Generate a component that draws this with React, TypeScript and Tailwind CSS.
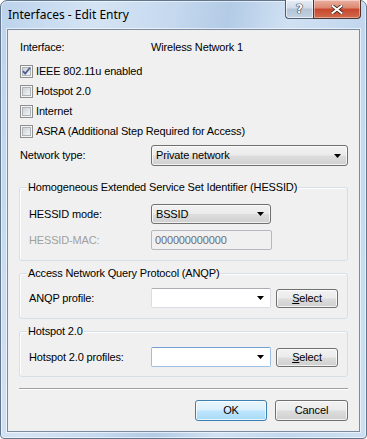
import React from 'react';

const font = "font-['Liberation_Sans',Arial,sans-serif]";

function CheckBox({ checked, label }: { checked?: boolean; label: string }) {
  return (
    <div className="flex h-[20px] items-center">
      <svg width="13" height="13" viewBox="0 0 13 13" className="ml-[1px] shrink-0">
        <defs>
          <linearGradient id="cbfill" x1="0" y1="0" x2="1" y2="1">
            <stop offset="0" stopColor="#cbcfd5" />
            <stop offset="1" stopColor="#f6f6f6" />
          </linearGradient>
        </defs>
        <rect x="0.5" y="0.5" width="12" height="12" fill="#f4f4f4" stroke="#8e8f8f" />
        <rect x="2.5" y="2.5" width="8" height="8" fill="url(#cbfill)" stroke="#aeb3b9" strokeWidth="1" />
        {checked && (
          <path d="M3 6.2 L5.2 8.6 L10 2.8" fill="none" stroke="#4a5f97" strokeWidth="1.8" />
        )}
      </svg>
      <span className="ml-[3px] text-[11px] tracking-[-0.15px] text-black">{label}</span>
    </div>
  );
}

function Arrow() {
  return (
    <svg width="7" height="4" viewBox="0 0 7 4" className="shrink-0">
      <path d="M0 0 H7 L3.5 4 Z" fill="#000" />
    </svg>
  );
}

function DropList({ value, className }: { value: string; className: string }) {
  return (
    <div
      className={`flex h-full items-center justify-between rounded-[3px] border border-[#707070] bg-[linear-gradient(180deg,#f2f2f2_0%,#ebebeb_48%,#dddddd_52%,#d0d0d0_100%)] pl-[4px] pr-[6px] shadow-[inset_0_0_0_1px_rgba(255,255,255,0.7)] ${className}`}
    >
      <span className="text-[11px] tracking-[-0.15px] text-black">{value}</span>
      <Arrow />
    </div>
  );
}

function EditCombo({ hover }: { hover?: boolean }) {
  return (
    <div
      className={`flex h-full w-[120px] items-center justify-end rounded-[2px] border bg-white pr-[6px] ${
        hover ? 'border-[#9cbfe3] border-t-[#6f9fd3]' : 'border-[#dadde3] border-t-[#abadb3]'
      }`}
    >
      <Arrow />
    </div>
  );
}

function Button({ children, className, primary }: { children: React.ReactNode; className: string; primary?: boolean }) {
  return (
    <div
      className={`flex items-center justify-center rounded-[3px] border text-[11px] tracking-[-0.15px] text-black shadow-[inset_0_0_0_1px_rgba(255,255,255,0.75)] ${
        primary
          ? 'border-[#3c7fb1] bg-[linear-gradient(180deg,#eaf6fd_0%,#d9f0fc_48%,#bee6fd_52%,#a7d9f5_100%)]'
          : 'border-[#707070] bg-[linear-gradient(180deg,#f2f2f2_0%,#ebebeb_48%,#dddddd_52%,#cfcfcf_100%)]'
      } ${className}`}
    >
      {children}
    </div>
  );
}

function Group({ title, className, children }: { title: string; className: string; children: React.ReactNode }) {
  return (
    <div className={`relative rounded-[3px] border border-[#d5dfe5] pl-[9px] shadow-[inset_1px_1px_0_#fff] ${className}`}>
      <span className="absolute -top-[8px] left-[7px] bg-[#f0f0f0] px-[1px] text-[11px] leading-[14px] tracking-[-0.15px] text-black">
        {title}
      </span>
      {children}
    </div>
  );
}

export default function App() {
  return (
    <div className={`h-[439px] w-[367px] bg-white ${font}`}>
      <div className="flex h-full flex-col rounded-t-[7px] rounded-b-[4px] border border-[#62768e] bg-[linear-gradient(100deg,#bcd3ec_0%,#d5e4f4_22%,#c4d8ee_40%,#b3cbe6_52%,#d0e1f3_66%,#c2d7ee_82%,#cde0f2_100%)] px-[6px] pb-[6px] shadow-[inset_0_0_0_1px_rgba(255,255,255,0.55)]">
        {/* title bar */}
        <div className="flex h-[28px] items-start justify-between">
          <span className="pl-[1px] pt-[6px] font-['Noto_Sans','Liberation_Sans',sans-serif] text-[12px] leading-[16px] text-black">
            Interfaces - Edit Entry
          </span>
          <div className="-mr-[1px] -mt-[1px] flex h-[19px]">
            <div className="flex w-[28px] items-center justify-center rounded-bl-[4px] border border-r-0 border-t-0 border-[#4e5d70] bg-[linear-gradient(180deg,#e6edf5_0%,#d2dce8_45%,#b3c3d6_50%,#c4d2e1_100%)] shadow-[inset_0_0_0_1px_rgba(255,255,255,0.6)]">
              <span className="font-['DejaVu_Sans',sans-serif] text-[12px] font-bold leading-none text-white [text-shadow:0_0_1px_#223,0_0_1px_#223,0_0_1px_#223]">
                ?
              </span>
            </div>
            <div className="flex w-[48px] items-center justify-center rounded-br-[4px] border border-t-0 border-[#4e3430] bg-[linear-gradient(180deg,#eab1a2_0%,#db8670_45%,#c8472d_50%,#d06a4c_100%)] shadow-[inset_0_0_0_1px_rgba(255,255,255,0.4)]">
              <svg width="12" height="9" viewBox="0 0 12 9">
                <path d="M1.5 1 L10.5 8 M10.5 1 L1.5 8" stroke="#40201a" strokeWidth="3.6" strokeLinecap="square" />
                <path d="M1.5 1 L10.5 8 M10.5 1 L1.5 8" stroke="#fff" strokeWidth="2" strokeLinecap="square" />
              </svg>
            </div>
          </div>
        </div>

        {/* client area */}
        <div className="flex flex-1 flex-col border border-[#7b8ca0] bg-[#f0f0f0] px-[11px] shadow-[0_0_0_1px_rgba(255,255,255,0.6)]">
          <div className="mt-[7px] flex h-[20px] items-center text-[11px] tracking-[-0.15px] text-black">
            <span className="w-[132px] pl-[1px]">Interface:</span>
            <span>Wireless Network 1</span>
          </div>

          <div className="mt-[4px] flex flex-col">
            <CheckBox checked label="IEEE 802.11u enabled" />
            <CheckBox label="Hotspot 2.0" />
            <CheckBox label="Internet" />
            <CheckBox label="ASRA (Additional Step Required for Access)" />
          </div>

          <div className="mt-[4px] flex h-[21px] items-center">
            <span className="w-[132px] pl-[1px] text-[11px] tracking-[-0.15px] text-black">Network type:</span>
            <DropList value="Private network" className="flex-1" />
          </div>

          <Group title="Homogeneous Extended Service Set Identifier (HESSID)" className="mt-[21px] pb-[10px] pt-[16px]">
            <div className="flex h-[20px] items-center">
              <span className="w-[122px] text-[11px] tracking-[-0.15px] text-black">HESSID mode:</span>
              <DropList value="BSSID" className="w-[120px]" />
            </div>
            <div className="mt-[6px] flex h-[20px] items-center">
              <span className="w-[122px] text-[11px] tracking-[-0.15px] text-[#a0a0a0]">HESSID-MAC:</span>
              <div className="flex h-full w-[121px] items-center rounded-[2px] border border-[#b5b9bf] bg-[#f0f0f0] pl-[3px] text-[11px] tracking-[-0.15px] text-[#6d6d6d]">
                000000000000
              </div>
            </div>
          </Group>

          <Group title="Access Network Query Protocol (ANQP)" className="mt-[12px] pb-[10px] pt-[14px]">
            <div className="flex h-[20px] items-center">
              <span className="w-[122px] text-[11px] tracking-[-0.15px] text-black">ANQP profile:</span>
              <EditCombo />
              <Button className="ml-[5px] h-[19px] w-[62px]">
                <span>
                  <span className="underline">S</span>elect
                </span>
              </Button>
            </div>
          </Group>

          <Group title="Hotspot 2.0" className="mt-[12px] pb-[9px] pt-[15px]">
            <div className="flex h-[20px] items-center">
              <span className="w-[122px] text-[11px] tracking-[-0.15px] text-black">Hotspot 2.0 profiles:</span>
              <EditCombo hover />
              <Button className="ml-[5px] h-[19px] w-[62px]">
                <span>
                  <span className="underline">S</span>elect
                </span>
              </Button>
            </div>
          </Group>

          <div className="mt-[11px] h-[2px] border-b border-t border-b-white border-t-[#a0a0a0]" />

          <div className="mt-[10px] flex justify-end gap-[8px]">
            <Button primary className="h-[21px] w-[72px]">
              OK
            </Button>
            <Button className="h-[21px] w-[73px]">Cancel</Button>
          </div>
        </div>
      </div>
    </div>
  );
}
